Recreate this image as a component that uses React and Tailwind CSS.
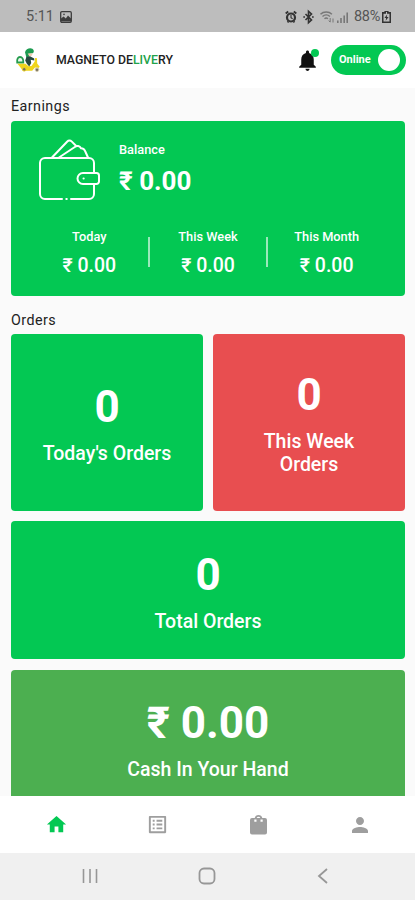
import { MdHome, MdListAlt, MdPerson, MdNotifications } from "react-icons/md"

const periods = ["Today", "This Week", "This Month"]

function StatusBar() {
  return (
    <div className="h-8 shrink-0 bg-[#bdbdbd] flex items-center justify-between pl-[26px] pr-[24px] text-[#555] text-[14.5px]">
      <div className="flex items-center gap-[6px] pt-[1px]">
        <span className="w-[28px] whitespace-nowrap">5:11</span>
        <svg width="12" height="12" viewBox="0 0 12 12" fill="none">
          <rect x=".7" y=".7" width="10.6" height="10.6" rx="1.2" stroke="#3c3c3c" strokeWidth="1.3" />
          <path d="M1 10.5V7.500l2.600-2.100 2.200 2 2.200-3L11 7.500v3z" fill="#3c3c3c" />
          <circle cx="4" cy="3.4" r=".8" fill="#3c3c3c" />
        </svg>
      </div>
      <div className="flex items-center pt-[1px]">
        <svg width="70" height="16" viewBox="0 0 70 16" className="mr-[-1px]" fill="none">
          <g stroke="#333">
            <circle cx="6" cy="8.5" r="4" strokeWidth="2.2" />
            <path d="M.7 4.600 3.200 2.600M11.300 4.600 8.800 2.600M2.500 13.300l1-1M9.500 13.300l-1-1" strokeWidth="1.9" />
            <path d="M6 6v2.700l1.600 1" strokeWidth="1.1" />
            <path d="m20.500 5 6 6-3 2.700V2.300l3 2.700-6 6" strokeWidth="1.6" />
            <path d="M18.300 8h1.700M27 8h1.700" strokeWidth="1.6" />
          </g>
          <g stroke="#777" strokeWidth="1.5">
            <path d="M35.500 5.200c3-2.800 8.400-2.800 11.400 0M37.500 7.500c2.200-1.900 5.400-1.900 7.400 0M39.500 9.700c1-.9 2.400-.9 3.400 0" />
            <path d="M45.200 9v4M43.700 11.600l1.500 1.600M48 13.500v-4" strokeWidth="1" />
          </g>
          <path d="M52 11.500h1.600V14H52zM55.200 9h1.600v5h-1.600zM58.400 6.500H60V14h-1.600zM61.400 3.500H63V14h-1.600z" fill="#777" />
        </svg>
        <span className="tracking-[-0.3px] w-[28px] whitespace-nowrap">88%</span>
        <svg width="9" height="12" viewBox="0 0 9 12" fill="none">
          <path d="M3.200.3h2.600v1.600h2.500v9.400H.7V1.900h2.500z" stroke="#333" strokeWidth="1.6" />
          <path d="M5.200 3.400 2.400 7h1.700l-.4 2.800L6.600 6H4.800z" fill="#333" />
        </svg>
      </div>
    </div>
  )
}

function Logo() {
  return (
    <svg width="26" height="26" viewBox="0 0 26 26" fill="none">
      <path d="M2.200 15.500C1.800 12 3 10 5 10c2.200 0 3.500 1.800 3.300 5.500z" fill="#e9f8ed" stroke="#249b4d" strokeWidth="1.800" />
      <path d="M2.500 16.800h8l3 2.400 3-.2 3.200-4.400.3-3.500 2 .2.2 5.300 2.500 3.200-1.200 1.200-3.500-.5-2.800 3.200H8z" fill="#f0d51c" />
      <path d="M10 5.300C11 .5 17.700-.2 18.700 3.500c.3 1.500-.2 2.500-1.200 2.800l-3.700.5.700 2.500-3 1.800z" fill="#1c9b50" />
      <path d="m12.700 6.500 4.900-.1-.6 2.200-2.500.8z" fill="#efcbb0" />
      <path d="M11.500 9.700 15 9.200l4.200 2.200v2.100l-3.500-.7.500 3.100-2 3.700-2.500-3-1.500-3z" fill="#26483f" />
      <circle cx="9.200" cy="22.300" r="1.800" fill="#75705d" stroke="#e9cf29" />
      <circle cx="22" cy="22.700" r="1.800" fill="#75705d" stroke="#d5ccb0" />
    </svg>
  )
}

function Header() {
  return (
    <header className="h-14 shrink-0 bg-white flex items-center pl-[15px] pr-[9px]">
      <Logo />
      <h1 className="ml-[15px] pt-[1px] text-[12.3px] font-medium text-[#222] whitespace-nowrap">
        MAGNETO DE<span className="text-[#22a34a]">LIVE</span>RY
      </h1>
      <div className="relative ml-auto">
        <MdNotifications className="w-[25px] h-[25px] text-[#111]" />
        <span className="absolute right-[1px] top-[1px] size-[8px] rounded-full bg-[#03c853]" />
      </div>
      <button className="ml-[11px] w-[75px] h-[30px] rounded-full bg-[#03c853] flex items-center justify-between pl-[8px] pr-[6px]">
        <span className="text-[11px] font-bold text-white">Online</span>
        <span className="size-[22px] rounded-full bg-white" />
      </button>
    </header>
  )
}

function Wallet() {
  return (
    <svg width="64" height="64" viewBox="0 0 64 64" fill="none" stroke="white" strokeWidth="2" strokeLinecap="round" strokeLinejoin="round">
      <path d="M24 62H7a5 5 0 0 1-5-5V26a5 5 0 0 1 5-5h44a5 5 0 0 1 5 5v9.500M56 47v10a5 5 0 0 1-5 5H33M28.300 62h.5" />
      <path d="M14 20.500 29.300 4.500a3 3 0 0 1 4.300-.1l4.600 4.600M21 20.500 36.800 10a4 4 0 0 1 6.200 1.200c2.500 0 3.700 1.500 4.500 3.800l2.500 5.500" />
      <path d="M58.500 36H45a5.500 5.500 0 0 0 0 11h13.500a2.500 2.500 0 0 0 2.500-2.500v-6a2.500 2.500 0 0 0-2.500-2.500z" />
      <path d="M45.500 41.500h.2" />
    </svg>
  )
}

function Earnings() {
  return (
    <section className="h-[175px] rounded bg-[#03c853] text-white">
      <div className="flex pt-4 pl-[27px]">
        <Wallet />
        <div className="ml-[17px] pt-[5px]">
          <p className="text-[12.8px] leading-4 font-medium">Balance</p>
          <p className="mt-[7px] text-[26px] leading-8 font-bold">₹ 0.00</p>
        </div>
      </div>
      <div className="flex items-start pt-[28px] px-[19px]">
        {periods.map((p, i) => (
          <div key={p} className="flex flex-1 relative justify-center">
            {i > 0 && <span className="absolute left-[-1px] top-[8px] w-[2px] h-[30px] bg-white/60" />}
            <div className="text-center">
              <p className="text-[12.8px] leading-4 font-medium">{p}</p>
              <p className="mt-[9px] text-[19.5px] leading-6 font-medium">₹ 0.00</p>
            </div>
          </div>
        ))}
      </div>
    </section>
  )
}

const Tile = ({ value, label, className }) => (
  <div className={`rounded text-white flex flex-col items-center text-center ${className}`}>
    <p className="text-[44px] leading-[52px] font-bold">{value}</p>
    <p className="mt-[9px] text-[19.5px] leading-[23px] font-medium">{label}</p>
  </div>
)

function BottomNav() {
  return (
    <nav className="h-[57px] shrink-0 bg-white flex items-center justify-between pl-[45px] pr-[43px] text-[#9e9e9e]">
      <MdHome className="size-[23px] text-[#03c853]" />
      <MdListAlt className="size-[23px]" />
      <svg width="23" height="23" viewBox="0 0 23 23">
        <path
          d="M5 5h2.700a3.900 3.900 0 0 1 7.600 0H18a2 2 0 0 1 2 2v12.500a2 2 0 0 1-2 2H5a2 2 0 0 1-2-2V7a2 2 0 0 1 2-2zm4.700 0h3.600a1.900 1.900 0 0 0-3.600 0zM7.300 6.500v2.300h2.200V6.500zm6.200 0v2.300h2.200V6.500z"
          fill="currentColor"
          fillRule="evenodd"
        />
      </svg>
      <MdPerson className="size-[24px]" />
    </nav>
  )
}

function SystemNav() {
  return (
    <div className="h-[47px] shrink-0 bg-[#f0f0f0] flex items-center justify-between pl-[82px] pr-[84px] pb-[2px]">
      <svg width="16" height="16" viewBox="0 0 16 16" stroke="#979797" strokeWidth="1.6">
        <path d="M1.500 1v14M8 1v14M14.500 1v14" />
      </svg>
      <svg width="18" height="18" viewBox="0 0 18 18" fill="none" stroke="#979797" strokeWidth="1.8">
        <rect x="1.500" y="1.500" width="15" height="15" rx="4.500" />
      </svg>
      <svg width="16" height="16" viewBox="0 0 16 16" fill="none" stroke="#979797" strokeWidth="1.8">
        <path d="M12 1 4 8l8 7" />
      </svg>
    </div>
  )
}

export default function App() {
  return (
    <div className="w-full h-[900px] flex flex-col overflow-hidden bg-[#fafafa] font-['Roboto',sans-serif]">
      <StatusBar />
      <Header />
      <main className="flex-1 min-h-0 overflow-hidden pl-[11px] pr-[10px]">
        <h2 className="pt-[8px] h-[33px] text-[14.3px] leading-5 tracking-[0.45px] text-[#222]">Earnings</h2>
        <Earnings />
        <h2 className="pt-[14px] h-[38px] text-[14.3px] leading-5 tracking-[0.45px] text-[#222]">Orders</h2>
        <div className="flex gap-[10px]">
          <Tile value="0" label="Today's Orders" className="flex-1 h-[177px] bg-[#03c853] pt-[47px]" />
          <Tile
            value="0"
            label={<>This Week<br />Orders</>}
            className="flex-1 h-[177px] bg-[#e84e50] pt-[35px]"
          />
        </div>
        <Tile value="0" label="Total Orders" className="mt-[10px] h-[138px] bg-[#03c853] pt-[28px]" />
        <Tile value="₹ 0.00" label="Cash In Your Hand" className="mt-[11px] h-[138px] bg-[#4caf50] pt-[27px]" />
      </main>
      <BottomNav />
      <SystemNav />
    </div>
  )
}
